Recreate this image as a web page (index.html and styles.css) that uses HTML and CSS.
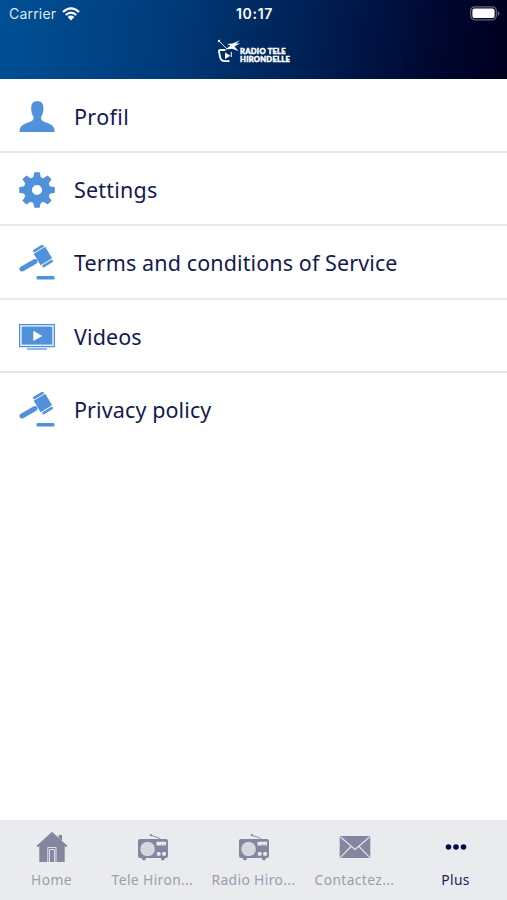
FILE: index.html
```html
<!DOCTYPE html>
<html lang="en">
<head>
<meta charset="utf-8">
<title>Radio Tele Hirondelle</title>
<link rel="stylesheet" href="styles.css">
</head>
<body>
<svg width="0" height="0" class="defs" aria-hidden="true">
  <symbol id="gavel" viewBox="0 0 36 36">
    <path d="M3 24L16 16.500" stroke="currentColor" stroke-width="5" stroke-linecap="round"/>
    <g transform="translate(24 11) rotate(-31)" fill="currentColor">
      <rect x="-6.800" y="-6.700" width="13.400" height="13.400"/>
      <rect x="-6" y="-10.200" width="12" height="2.600" rx="1.200"/>
      <rect x="-6" y="7.600" width="12" height="2.600" rx="1.200"/>
    </g>
    <rect x="17.500" y="31" width="18" height="3.600" rx="1.400" fill="currentColor"/>
  </symbol>
  <symbol id="radio" viewBox="0 0 32 30">
    <path d="M14 3.200L23 6.500" stroke="currentColor" stroke-width=".9"/>
    <circle cx="13.800" cy="3.200" r="1.100" fill="currentColor"/>
    <path d="M3 7H29Q31 7 31 9V24Q31 26 29 26H28L27.200 28.300H24.600L23.800 26H9L8.200 28.300H5.600L4.800 26H3Q1 26 1 24V9Q1 7 3 7Z" fill="currentColor"/>
    <circle cx="10.600" cy="17" r="7.300" fill="#d5d7de"/>
    <g fill="#e9eaee"><path d="M19.500 9.700h9.600v3.800h-1.600v-1.600h-.6v1.600h-2v-1.600h-.6v1.600h-4.800z"/><rect x="19.800" y="20" width="3.800" height="3.800" rx="1.200"/><rect x="25.200" y="20" width="3.800" height="3.800" rx="1.200"/></g>
  </symbol>
</svg>
<header class="header">
  <div class="status">
    <div class="carrier"><span>Carrier</span>
      <svg width="18" height="14" viewBox="0 0 18 14" fill="none" stroke="#fff" stroke-width="2.300"><path d="M1 5Q9-2.300 17 5M3.800 8Q9 3.200 14.200 8"/><path d="M9 13.400L5.700 10Q9 7.200 12.300 10Z" fill="#fff" stroke="none"/></svg>
    </div>
    <span class="time">10:17</span>
    <svg class="battery" width="31" height="15" viewBox="0 0 31 15"><rect x="1.700" y=".8" width="25.600" height="13" rx="4" fill="none" stroke="#666582" stroke-width="1.200"/><rect x="3.400" y="2.600" width="22.200" height="9.500" rx="2.200" fill="#fff"/><path d="M28.700 5v4.700q1.800-.7 1.800-2.300T28.700 5z" fill="#666582"/></svg>
  </div>
  <div class="logo">
    <svg width="23" height="24" viewBox="0 0 23 24" fill="none" stroke="#fff">
      <path d="M2 2L10 10" stroke-width=".9"/><circle cx="2" cy="2" r="1.200" fill="#fff" stroke="none"/>
      <path d="M8.500 10.500L13.500 6.500L10 5L15.500 4.600L23 1.200L19 4.500L23 4.500L17.500 7.500L21.500 12L15 9.800Z" fill="#fff" stroke="none"/>
      <path d="M8.500 11H3Q1.600 11 2 12.500L3.200 18.500Q4 22 8 22.200H12.500" stroke-width="1.800"/><path d="M14.300 13V18" stroke-width="1"/>
      <path d="M8 13.500L13.500 16.700L8 20Z" fill="#fff" stroke="none"/>
    </svg>
    <div class="brand"><div>RADIO TELE</div><div>HIRONDELLE</div></div>
  </div>
</header>
<main class="list">
  <a class="row"><svg width="36" height="36" viewBox="0 0 36 36"><path d="M12.200 9.500C12.200 4 14.500 2.200 18.300 2.200S24.500 4 24.500 9.500C24.500 13.500 23.200 16 22.200 17.800C21.900 21.200 22.800 21.700 26.300 23.200C33 25.500 35.600 27 35.600 33H.6C.6 27 3.500 25.500 10 23.200C13.500 21.700 14.800 21.200 14.500 17.800C13.200 16 12.200 13.500 12.200 9.500Z" fill="currentColor"/></svg><span class="profil">Profil</span></a>
  <a class="row"><svg width="36" height="36" viewBox="0 0 36 36" fill="currentColor"><path fill-rule="evenodd" d="M18 4.700A13.300 13.300 0 1 0 18 31.300A13.300 13.300 0 1 0 18 4.700ZM18 12.900A5.100 5.100 0 1 1 18 23.100A5.100 5.100 0 1 1 18 12.900Z"/><g id="tooth"><path d="M14 6.500L15.300.2H20.700L22 6.500ZM14 29.500L15.300 35.800H20.700L22 29.500Z"/></g><use href="#tooth" transform="rotate(45 18 18)"/><use href="#tooth" transform="rotate(90 18 18)"/><use href="#tooth" transform="rotate(135 18 18)"/></svg><span class="settings">Settings</span></a>
  <a class="row"><svg width="36" height="36"><use href="#gavel"/></svg><span class="terms">Terms and conditions of Service</span></a>
  <a class="row"><svg width="36" height="36" viewBox="0 0 36 36"><rect x=".6" y="5.600" width="34.800" height="22" fill="#edf4fc" stroke="currentColor" stroke-width="1.300"/><rect x="2.700" y="7.600" width="30.600" height="18" fill="currentColor"/><path d="M14.300 11.700L23.300 17L14.300 22Z" fill="#fff"/><path d="M8 30H28" stroke="currentColor" stroke-width="1.700" opacity=".75"/></svg><span class="videos">Videos</span></a>
  <a class="row"><svg width="36" height="36"><use href="#gavel"/></svg><span class="privacy">Privacy policy</span></a>
</main>
<nav class="tabs">
  <a class="tab"><svg width="32" height="32" viewBox="0 0 32 32" fill="currentColor"><path d="M16 .8L31.500 15L30 16.200L28.700 15V31H3.300V15L2 16.200L.5 15Z"/><path d="M22.500 5V4H26V9.700L22.500 6.500Z"/><path d="M11.800 31V16.500H20V31M13.500 31V18.500H18.400V31" fill="none" stroke="#dfe1e7" stroke-width="1"/></svg><span class="home">Home</span></a>
  <a class="tab"><svg width="32" height="30"><use href="#radio"/></svg><span class="tele">Tele Hiron...</span></a>
  <a class="tab"><svg width="32" height="30"><use href="#radio"/></svg><span class="radio">Radio Hiro...</span></a>
  <a class="tab"><svg width="32" height="24" viewBox="0 0 32 24"><rect x=".7" y="1" width="30.600" height="22" rx="1.500" fill="currentColor"/><path d="M1.500 2L16 14.500L30.500 2M1.500 22.300L12 11.500M30.500 22.300L20 11.500" fill="none" stroke="#e4e5eb" stroke-width="1.200"/></svg><span class="contact">Contactez...</span></a>
  <a class="tab active"><svg width="22" height="8" viewBox="0 0 22 8" fill="currentColor"><circle cx="3.500" cy="4" r="2.800"/><circle cx="11" cy="4" r="2.800"/><circle cx="18.500" cy="4" r="2.800"/></svg><span class="plus">Plus</span></a>
</nav>
</body>
</html>
```
FILE: styles.css
```css
* { box-sizing: border-box; }
body { margin: 0; height: 900px; display: flex; flex-direction: column; overflow: hidden; background: #fff; font-family: "Noto Sans", sans-serif; }
svg { display: block; flex: none; }
.defs { position: absolute; }
.header { height: 79px; flex: none; color: #fff; background: linear-gradient(98deg, #005096 0%, #003c7b 32%, #002860 52%, #001445 72%, #00062d 87%, #00001f 100%); }
.status { height: 27px; display: grid; grid-template-columns: 1fr auto 1fr; align-items: center; padding: 0 7px 0 9px; font: 14px/18px Inter, sans-serif; }
.carrier { display: flex; align-items: center; gap: 6px; color: #dce7f2; letter-spacing: .2px; }
.time { font-weight: 600; letter-spacing: .7px; }
.battery { justify-self: end; }
.logo { display: flex; margin: 12px 0 0 217px; }
.brand { margin-top: 8px; font: 900 7.6px/8px Lato, sans-serif; letter-spacing: .26px; -webkit-text-stroke: .45px #fff; white-space: nowrap; }
.list { flex: 1; }
.row { height: 73.3px; display: flex; align-items: center; gap: 19px; padding: 3px 19px 0 19px; border-bottom: 2px solid #e8e8e9; color: #4f91da; }
.row:first-child { height: 74px; padding-top: 4px; }
.row:last-child { border-bottom-color: transparent; }
.row span { color: #14194f; font-size: 21.5px; line-height: 30px; letter-spacing: .11px; white-space: nowrap; }
.row .profil { letter-spacing: .35px; }
.row .settings { letter-spacing: .2px; }
.tabs { height: 80px; flex: none; display: grid; grid-template-columns: repeat(5, 1fr); background: #e9ebef; padding: 0 1px; }
.tab { display: grid; grid-template-rows: 54px 20px; justify-items: center; align-items: center; color: #82869f; }
.tab span { font-size: 13.8px; line-height: 20px; color: #9a9dae; letter-spacing: .4px; white-space: nowrap; margin-top: -9px; }
.tab.active { color: #050a4a; }
.tab.active span { color: #1c2158; }
```
